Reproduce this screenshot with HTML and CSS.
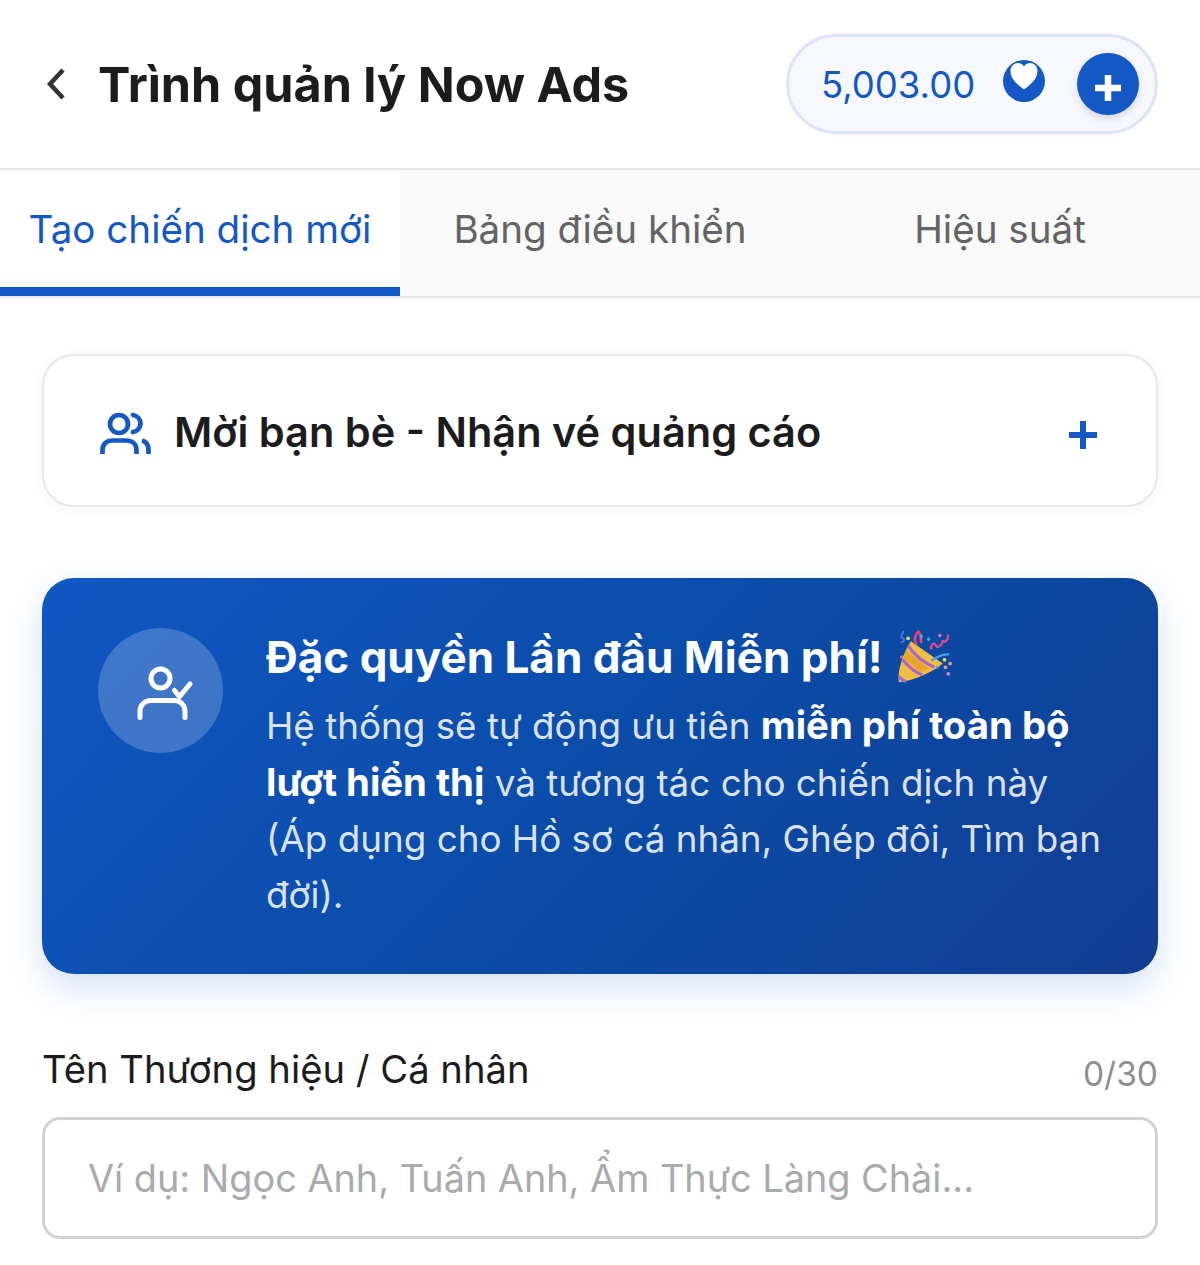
FILE: index.html
```html
<!DOCTYPE html>
<html lang="vi">
<head>
    <meta charset="UTF-8">
    <meta name="viewport" content="width=device-width, initial-scale=1.0">
    <link rel="stylesheet" href="styles.css">
    <title>Trình quản lý Now Ads</title>
</head>
<body>
    <header class="top-bar">
        <div class="top-bar-left">
            <svg class="back-icon" viewBox="0 0 20 36">
                <path d="M17 4 L4 18 L17 32" fill="none" stroke="currentColor" stroke-width="4.5"/>
            </svg>
            <h1 class="page-title">Trình quản lý Now Ads</h1>
        </div>
        <div class="balance">
            <span class="balance-value">5,003.00</span>
            <svg class="balance-heart" viewBox="0 0 42 42">
                <circle cx="21" cy="21" r="21" fill="#1358c4"/>
                <path d="M21 29.500 C14 24 7.500 19 7.500 11 C7.500 6 11 3 15 3 C17.500 3 20 4.300 21 6.500 C22 4.300 24.500 3 27 3 C31 3 34.500 6 34.500 11 C34.500 19 28 24 21 29.500 Z" fill="#fff"/>
            </svg>
            <button class="balance-add">
                <svg viewBox="0 0 26 26">
                    <path d="M13 0 V26 M0 13 H26" stroke="currentColor" stroke-width="6.500"/>
                </svg>
            </button>
        </div>
    </header>

    <nav class="tabs">
        <div class="tab tab-active">Tạo chiến dịch mới</div>
        <div class="tab">Bảng điều khiển</div>
        <div class="tab">Hiệu suất</div>
    </nav>

    <main class="content">
        <section class="invite-card">
            <div class="invite-left">
                <svg class="invite-icon" viewBox="0 0 52 42" fill="none" stroke="currentColor" stroke-width="4.700">
                    <circle cx="19" cy="12" r="9"/>
                    <path d="M33 3 C43 5 43 18 33 20" stroke-linecap="round"/>
                    <path d="M2.500 42 V38 C2.500 32 7 28.500 12 28.500 H26 C32 28.500 36.500 32 36.500 38 V42"/>
                    <path d="M42 28.500 C46 29.500 48.500 33 48.500 38 V42" stroke-linecap="butt"/>
                </svg>
                <span class="invite-title">Mời bạn bè - Nhận vé quảng cáo</span>
            </div>
            <svg class="invite-plus" viewBox="0 0 30 30">
                <path d="M15 1 V29 M1 15 H29" stroke="currentColor" stroke-width="6"/>
            </svg>
        </section>

        <section class="promo">
            <div class="promo-badge">
                <svg viewBox="0 0 60 60" fill="none" stroke="#fff" stroke-width="5" stroke-linecap="round">
                    <circle cx="29.500" cy="17.500" r="9.500"/>
                    <path d="M9 56.500 V50 C9 44 14 39.500 20 39.500 H43 C49 39.500 54 44 54 50 V56.500"/>
                    <path d="M43.500 29.500 L48.500 35.500 L59 23"/>
                </svg>
            </div>
            <div class="promo-body">
                <h2 class="promo-title">
                    Đặc quyền Lần đầu Miễn phí!
                    <svg class="promo-emoji" viewBox="0 0 60 60">
                        <path d="M16 13 L50 37 C40 46 20 55 3 57 C1 45 8 25 16 13 Z" fill="#f3bd3f"/>
                        <path d="M11 23 L35 42 L27 46 L7 31 Z" fill="#e9a52b"/>
                        <path d="M13 18 C19 27 30 36 41 41 M7 33 C13 40 21 47 28 49 M3 51 C6 54 9 56 11 56" fill="none" stroke="#a868c9" stroke-width="3.500"/>
                        <path d="M22 17 C17 8 26 0 24 4 C30 6 24 12 28 15" fill="none" stroke="#e0447c" stroke-width="3"/>
                        <path d="M38 22 C36 17 42 13 43 18 C45 22 50 16 50 12 C52 16 56 12 56 6" fill="none" stroke="#d9478c" stroke-width="2.500"/>
                        <path d="M38 34 C45 29 50 27 57 27" fill="none" stroke="#4a9fe8" stroke-width="2.500"/>
                        <path d="M7 10 C3 7 9 4 8 2 M5 14 C9 14 10 11 7 10" fill="none" stroke="#4a7fe8" stroke-width="1.800"/>
                        <circle cx="13" cy="10" r="2" fill="#e8d860"/>
                        <circle cx="27" cy="8" r="1.800" fill="#5aa0e0"/>
                        <circle cx="35" cy="11" r="1.800" fill="#5aa0e0"/>
                        <circle cx="47" cy="7" r="1.800" fill="#d87aa8"/>
                        <circle cx="52" cy="33" r="2" fill="#e8d860"/>
                        <circle cx="58" cy="37" r="2" fill="#e0a080"/>
                        <circle cx="53" cy="41" r="2" fill="#e0a080"/>
                        <circle cx="44" cy="41" r="1.500" fill="#5aa0e0"/>
                        <circle cx="56" cy="48" r="2" fill="#c98ae0"/>
                        <circle cx="6" cy="30" r="1.500" fill="#d87aa8"/>
                    </svg>
                </h2>
                <p class="promo-text">Hệ thống sẽ tự động ưu tiên <b>miễn phí toàn bộ</b> <b>lượt hiển thị</b> và tương tác cho chiến dịch này (Áp dụng cho Hồ sơ cá nhân, Ghép đôi, Tìm bạn đời).</p>
            </div>
        </section>

        <section class="field">
            <div class="field-head">
                <span class="field-label">Tên Thương hiệu / Cá nhân</span>
                <span class="field-count">0/30</span>
            </div>
            <div class="field-input">Ví dụ: Ngọc Anh, Tuấn Anh, Ẩm Thực Làng Chài...</div>
        </section>
    </main>
</body>
</html>
```

FILE: styles.css
```css
* {
    margin: 0;
    padding: 0;
    box-sizing: border-box;
}

body {
    min-height: 100vh;
    background-color: white;
    color: #1c1c1e;
    font-family: Inter, "Liberation Sans", sans-serif;
}

.top-bar {
    display: flex;
    justify-content: space-between;
    align-items: center;
    height: 168px;
    padding: 0 42px 0 46px;
}
.top-bar-left {
    display: flex;
    align-items: center;
    gap: 32px;
}
.back-icon {
    width: 20px;
    height: 36px;
    color: #333;
}
.page-title {
    font-size: 48.5px;
    font-weight: 700;
    color: #1c1c1e;
}

.balance {
    display: flex;
    align-items: center;
    width: 372px;
    height: 100px;
    padding: 0 16px 0 32px;
    border: 3px solid #dbe4f8;
    border-radius: 50px;
    background-color: #f6f8fd;
}
.balance-value {
    margin-top: 2px;
    font-size: 36.5px;
    color: #1358c4;
}
.balance-heart {
    width: 42px;
    height: 42px;
    margin-left: 28px;
    margin-bottom: 6px;
}
.balance-add {
    display: flex;
    justify-content: center;
    align-items: center;
    width: 62px;
    height: 62px;
    margin-left: auto;
    padding-top: 8px;
    border: none;
    border-radius: 50%;
    color: white;
    background-color: #1358c4;
    box-shadow: 0 3px 8px rgba(0, 0, 0, 0.15);
}
.balance-add svg {
    width: 26px;
    height: 26px;
}

.tabs {
    display: grid;
    grid-template-columns: repeat(3, 1fr);
    height: 130px;
    border-top: 2px solid #e6e6e8;
    border-bottom: 2px solid #e6e6e8;
    background-color: #f9f9f9;
}
.tab {
    display: flex;
    justify-content: center;
    align-items: center;
    padding-bottom: 8px;
    font-size: 38.6px;
    color: #636366;
}
.tab-active {
    border-bottom: 9px solid #1358c4;
    padding-bottom: 0;
    color: #1358c4;
    background-color: white;
}

.content {
    padding: 56px 42px 0;
}

.invite-card {
    display: flex;
    justify-content: space-between;
    align-items: center;
    height: 153px;
    padding: 2px 58px 0 56px;
    border: 2px solid #e8e8ea;
    border-radius: 32px;
    background-color: white;
    box-shadow: 0 2px 14px rgba(0, 0, 0, 0.04);
}
.invite-left {
    display: flex;
    align-items: center;
    gap: 22px;
}
.invite-icon {
    width: 52px;
    height: 42px;
    margin-top: 2px;
    color: #1358c4;
}
.invite-title {
    font-size: 41.5px;
    font-weight: 600;
}
.invite-plus {
    width: 30px;
    height: 30px;
    margin-top: 6px;
    color: #1358c4;
}

.promo {
    display: flex;
    gap: 43px;
    height: 396px;
    margin-top: 71px;
    padding: 50px 44px 0 56px;
    border-radius: 32px;
    color: white;
    background: linear-gradient(135deg, #1057c2 0%, #0a4ba6 55%, #123d92 100%);
    box-shadow: 0 14px 34px rgba(19, 88, 196, 0.18);
}
.promo-badge {
    display: flex;
    justify-content: center;
    align-items: center;
    flex-shrink: 0;
    width: 125px;
    height: 125px;
    border-radius: 50%;
    background-color: rgba(255, 255, 255, 0.2);
}
.promo-badge svg {
    width: 60px;
    height: 60px;
    overflow: visible;
}
.promo-title {
    display: flex;
    align-items: center;
    gap: 13px;
    height: 60px;
    margin-top: -1px;
    font-size: 44px;
    font-weight: 700;
}
.promo-emoji {
    width: 56px;
    height: 56px;
}
.promo-text {
    margin-top: 10px;
    font-size: 36.8px;
    line-height: 56px;
    color: rgba(255, 255, 255, 0.86);
}
.promo-text b {
    font-size: 38.3px;
    font-weight: 700;
    color: white;
}

.field {
    margin-top: 69px;
}
.field-head {
    display: flex;
    justify-content: space-between;
    align-items: flex-end;
    height: 49px;
}
.field-label {
    font-size: 38.2px;
    color: #1c1c1e;
}
.field-count {
    margin-bottom: -2px;
    font-size: 33.5px;
    color: #8e8e93;
}
.field-input {
    display: flex;
    align-items: center;
    height: 122px;
    margin-top: 25px;
    padding: 0 43px;
    border: 3px solid #d1d1d6;
    border-radius: 18px;
    font-size: 37.8px;
    color: #a9a9ae;
    background-color: white;
}
```
